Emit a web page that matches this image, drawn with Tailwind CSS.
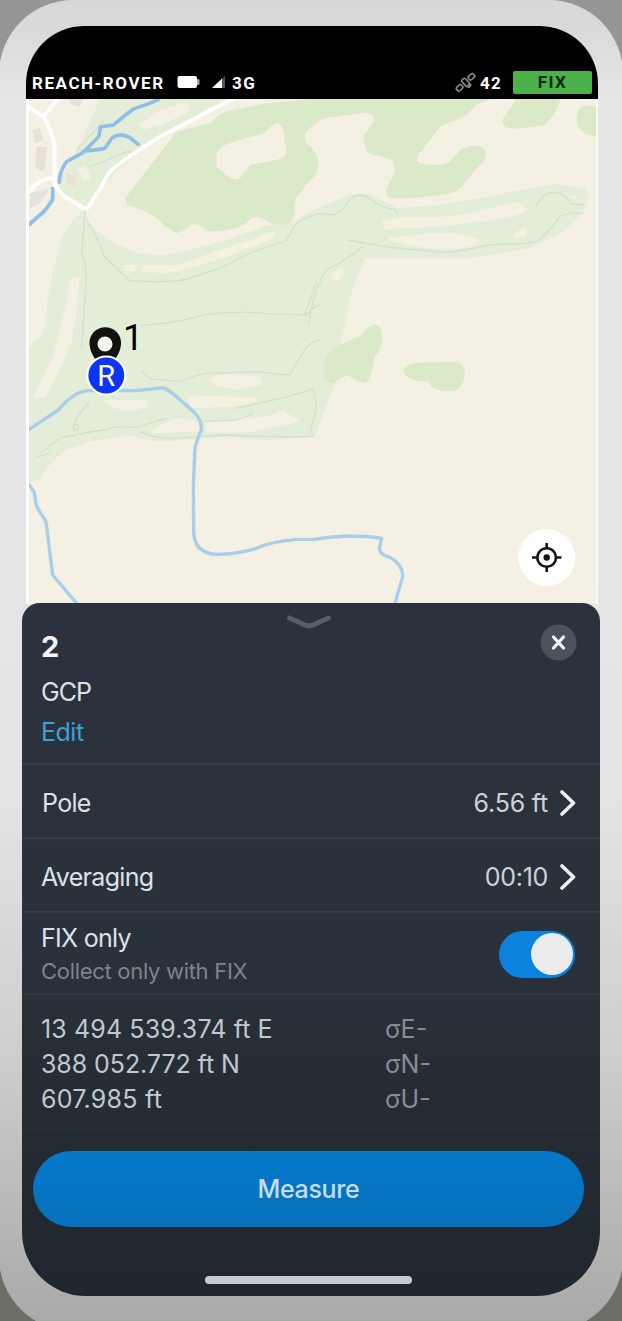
<!DOCTYPE html>
<html lang="en">
<head>
<meta charset="utf-8">
<title>Reach Rover survey</title>
<script src="https://cdn.jsdelivr.net/npm/@tailwindcss/browser@4"></script>
</head>
<body class="w-[622px] h-[1321px] overflow-hidden bg-linear-to-b from-[#969696] to-[#6c6d65] font-['Inter',sans-serif]">
<main class="w-[624px] h-[1331px] -ml-px rounded-[74px] pt-[26px] pl-[23px] bg-[linear-gradient(180deg,#d8d8d8_0px,#d9d9d9_25px,#e6e6e6_100px,#e6e6e8_500px,#e4e3e2_800px,#cfcdcc_1060px,#b4b4b4_1240px,#a8a8a8_1331px)]">
  <div class="w-[578px] h-[1270px] overflow-hidden rounded-t-[60px] rounded-b-[64px]">
    <header class="ml-[4px] w-[572px] h-[73px] bg-black rounded-t-[58px] flex items-end pb-[4px] pl-[6px] pr-[6px] text-white font-['Roboto',sans-serif] font-bold text-[17px] leading-[24px]">
      <span class="w-[145px] tracking-[1.55px] whitespace-nowrap">REACH-ROVER</span>
      <svg class="w-[24px] h-[24px]" viewBox="0 0 24 24"><rect x="0.500" y="5" width="19.500" height="12" rx="2" fill="#fff"/><path d="M20 8h1q1.500 0 1.500 1.500v3q0 1.500-1.500 1.500H20" fill="#aaa"/></svg>
      <svg class="ml-[10px] w-[15px] h-[24px]" viewBox="0 0 15 24"><path d="M14 5V17H10V9z" fill="#555"/><path d="M1 17L11 7.500V17z" fill="#fff"/></svg>
      <span class="ml-[6px] tracking-[1.4px]">3G</span>
      <svg class="ml-auto w-[22px] h-[24px]" viewBox="0 0 22 24" fill="none" stroke="#8d8d8d" stroke-width="1.600"><rect x="-3.300" y="-2.300" width="6.600" height="4.600" rx="1.800" transform="translate(4.600 16.800) rotate(-42)"/><rect x="-3.300" y="-2.300" width="6.600" height="4.600" rx="1.800" transform="translate(16.400 5.800) rotate(-42)"/><rect x="-2.300" y="-4.200" width="4.600" height="8.400" rx="1.800" transform="translate(10.600 11.300) rotate(-42)"/><path d="M12.500 16.500q3-.5 3.500-3.500"/></svg>
      <span class="ml-[3px] w-[33px] tracking-[1.2px]">42</span>
      <span class="w-[79px] h-[23px] leading-[23px] rounded-[2px] bg-[#4cb04b] text-[#0b2a0d] text-center tracking-[1.4px] mb-px">FIX</span>
    </header>

    <section class="relative ml-[4px] w-[572px] h-[505px] bg-[#f4f0e3]">
      <svg class="block w-full h-full" viewBox="26 99 572 505" fill="none" stroke-linejoin="round" stroke-linecap="round">
        <g fill="#e4edd7">
          <path d="M100 99L78 148 60 180 58 190 86 209 115 172 160 136 232 99z"/>
          <path d="M83 210L70 225 60 242 53 272 48 295 45 328 29 348V483L40 480 53 460 67 450 87 442 127 435 160 442 220 437 267 440 315 437 327 403 335 383 342 338 347 312 353 288 365 258H470L530 248 563 232 583 212Q592 190 583 188L557 184 510 192 470 200 437 205 397 208 370 194H350L310 212 293 223 267 225 233 238 197 248 163 255 137 253 113 242 93 228z"/>
        </g>
        <g transform="translate(20 95) scale(.33333)">
          <path fill="#dae9c8" d="M315 310L400 200 470 110 570 85Q600 50 640 45L740 25 880 12H1410L1370 30Q1330 75 1290 80L1260 95 1195 180Q1185 200 1200 205 1240 215 1285 203 1300 190 1320 165 1370 140 1395 165 1405 190 1370 220L1330 270Q1310 295 1270 299 1150 315 1110 308 1092 303 1102 275L1125 230Q1125 195 1105 190L1050 177Q1030 165 1032 120L1062 80Q1062 53 1040 53L910 70 870 98Q845 120 860 145 895 170 896 210 895 235 870 255L835 300Q820 320 825 350 820 385 790 390L750 385Q725 365 710 365 690 365 680 385 620 415 560 407L540 392Q520 380 505 398L470 415 430 390Q400 350 320 330z"/>
          <path fill="#dae9c8" d="M1490 12H1620Q1615 50 1575 90L1500 100Q1440 105 1450 70zM1728 35Q1700 25 1680 40 1665 60 1672 90 1685 120 1728 122z"/>
          <g fill="#f4f0e3">
            <path d="M590 175Q595 155 640 140L730 115 765 85Q785 80 790 110L800 170Q800 185 770 195L690 210 660 250Q645 260 620 240L590 215z"/>
            <path d="M355 90L420 45 500 22Q520 35 490 60L420 90 370 105z"/>
            <path d="M360 510L470 510 600 465 720 425 760 410Q775 420 740 440L620 485 510 520 430 535 365 530zM310 510l45 0-15 22-25-5z"/>
            <path d="M1085 380Q1110 362 1250 368 1370 355 1460 325 1515 318 1520 345 1510 360 1450 368 1280 400 1095 402zM1100 430Q1180 420 1250 413 1370 415 1380 440 1350 465 1250 463 1130 450 1100 430zM1475 430Q1490 400 1520 400L1515 425zM930 540Q950 515 975 520 970 545 945 562zM1645 305l20-5 5 15z"/>
            <path d="M155 545L178 550 170 650 155 740 130 800 75 910 40 905 100 780 125 680z"/>
            <path d="M170 220l25-8 20 40-25 5z"/>
          </g>
          <g fill="#e7e1d7"><path d="M38 105L60 98 70 135 45 145zM50 155L80 155 75 225Q60 235 45 215zM140 230L170 250 165 275 140 265zM145 12H188L180 35 155 30zM30 295L90 280 60 325 28 340z"/></g>
          <g stroke="#d4e0ce" stroke-width="4">
            <path d="M195 350L185 480Q203 520 198 560L185 760M200 375Q240 440 250 480 290 520 330 557 450 565 500 552L600 520 700 470Q770 450 800 435 820 400 830 385 870 360 900 355Q940 365 960 350L1000 305Q1020 295 1040 305L1070 325Q1110 345 1125 342L1135 360"/>
            <path d="M360 692Q470 685 550 660 650 645 740 656L860 660Q880 635 900 630M890 560L855 655M985 435Q1100 460 1280 472 1350 465 1400 450L1520 445Q1560 445 1590 400L1620 365Q1650 350 1690 355M1550 330Q1570 290 1610 292 1640 300 1650 325L1690 330M1025 455Q990 490 920 525 885 570 865 690"/>
            <path d="M170 165L250 80M210 215L320 170 350 175"/>
          </g>
          <path stroke="#8fbfe9" stroke-width="11" d="M415 14Q380 30 340 42 310 65 280 90L242 96 236 125 190 172 140 200Q118 230 118 262M190 168Q230 165 255 160L275 130Q300 110 330 128L355 148M98 280L98 312Q80 345 60 360L28 388"/>
          <path stroke="#fff" stroke-width="12" d="M640 10L420 125Q330 180 275 225 260 240 245 275L205 335Q200 345 190 338L130 302 104 270V150Q90 95 70 65L25 35M70 65L110 15M28 290Q60 245 104 250"/>
        </g>
        <g transform="translate(20 320) scale(.33333)">
          <path fill="#dae9c8" d="M915 115Q950 70 1020 50L1045 20Q1085 0 1087 50 1087 90 1065 105L1050 175Q1035 200 1010 180L980 165 940 190Q910 190 910 160zM1150 150Q1165 125 1210 128L1300 125Q1335 125 1335 165 1330 205 1300 212 1240 218 1225 185 1155 185 1150 150z"/>
          <g fill="#f4f0e3"><path d="M570 175Q610 155 720 170L725 195 660 208 590 200zM500 225L700 232 715 245 640 260 510 265zM250 240L380 240 385 260 330 275 280 265zM395 340Q420 305 480 295L520 300 550 335zM555 305L740 290 790 270 840 305 700 335 560 338zM30 0H75L65 50 30 70z"/></g>
          <g stroke="#d4e0ce" stroke-width="4"><path d="M365 155Q390 180 410 178L480 185Q520 165 560 160L700 155 810 165Q830 130 850 95 870 65 900 60M650 265L760 240Q830 225 880 205L890 260 870 340M60 400L120 355Q180 340 250 330L290 320 350 322Q400 305 440 295M555 305L650 300 700 280M360 335Q400 355 450 355L620 345 740 350 880 350M160 320Q180 270 210 245M50 410L90 400"/><circle cx="167" cy="322" r="8"/></g>
          <path stroke="#abcdec" stroke-width="10" d="M28 328L115 270Q160 215 205 212H350L430 203Q450 210 525 280 545 300 544 330 530 360 525 385L520 500 521 630Q520 700 590 703 650 703 710 685 750 665 830 658H880Q930 650 980 648 1040 648 1085 655L1078 685Q1080 705 1110 712 1150 735 1148 770L1125 850M28 495L42 515 50 560 78 605 98 765 170 850"/>
        </g>
        <path d="M27.500 99V604" stroke="#fffefa" stroke-width="3" stroke-linecap="butt"/><path d="M597.500 99V604" stroke="#fbfbee" stroke-width="2" stroke-linecap="butt"/>
        <path d="M105 370Q89.500 356 89.500 343A15.700 15.700 0 0 1 121 343Q121 356 105 370z" fill="#111"/><circle cx="105" cy="344" r="7.500" fill="#f1f5e9"/>
        <circle cx="106.300" cy="375.500" r="19" fill="#0b36f5" stroke="#fff" stroke-width="2.200"/>
        <text x="106.300" y="386" text-anchor="middle" fill="#fff" font-family="Roboto" font-size="29">R</text>
        <text x="123" y="350" fill="#000" font-family="Roboto" font-size="36">1</text>
        <circle cx="546.700" cy="557.500" r="28.500" fill="#fff"/>
        <g stroke="#161616" stroke-width="2.600" stroke-linecap="butt"><circle cx="546.700" cy="557.500" r="9.300"/><path d="M546.700 543v6M546.700 566v6M532 557.500h6M555.500 557.500h6"/></g><circle cx="546.700" cy="557.500" r="3.200" fill="#161616"/>
      </svg>
    </section>

    <section class="relative -mt-px h-[693px] rounded-t-[18px] bg-linear-to-b from-[#2b323d] via-[#29313a] via-50% to-[#20262d] text-[#dde1ea] text-[25px] leading-[34px]">
      <div class="h-[162px] pl-[19px] pr-[23px] grid grid-cols-[1fr_46px_1fr] items-start border-b-2 border-[#343d48]">
        <div class="pt-[27px]">
          <div class="text-[29px] font-bold text-[#f3f5fa]">2</div>
          <div class="mt-[11px] tracking-[-.9px]">GCP</div>
          <div class="mt-[6px] text-[#3d9fdb] tracking-[-.5px]">Edit</div>
        </div>
        <svg class="mt-[10px] w-[46px] h-[18px]" viewBox="0 0 46 18" fill="none" stroke="#565e68" stroke-width="4.800" stroke-linecap="round" stroke-linejoin="round"><path d="M3.500 5L18 11.500Q23 14 28 11.500L42.500 5"/></svg>
        <svg class="mt-[21px] w-[37px] h-[37px] justify-self-end" viewBox="0 0 37 37"><circle cx="18.500" cy="18.500" r="18" fill="#4a525c"/><path d="M13.500 13L23.500 24M23.500 13L13.500 24" stroke="#f6f7fb" stroke-width="3.200" stroke-linecap="round"/></svg>
      </div>
      <div class="h-[74px] pt-[3px] pl-[20px] pr-[24px] flex items-center border-b-2 border-[#343d48]">
        <span class="tracking-[-.7px]">Pole</span>
        <span class="ml-auto text-[#cdd2db] tracking-[-.2px]">6.56 ft</span>
        <svg class="ml-[11px] w-[17px] h-[28px]" viewBox="0 0 17 28" fill="none" stroke="#f1f3f8" stroke-width="3.600" stroke-linecap="round" stroke-linejoin="round"><path d="M3 3L14.500 14L3 25"/></svg>
      </div>
      <div class="h-[74px] pt-[3px] pl-[19px] pr-[24px] flex items-center border-b-2 border-[#323b44]">
        <span class="tracking-[-.7px]">Averaging</span>
        <span class="ml-auto text-[#cdd2db] tracking-[-.3px]">00:10</span>
        <svg class="ml-[11px] w-[17px] h-[28px]" viewBox="0 0 17 28" fill="none" stroke="#f1f3f8" stroke-width="3.600" stroke-linecap="round" stroke-linejoin="round"><path d="M3 3L14.500 14L3 25"/></svg>
      </div>
      <div class="h-[82px] pt-[2px] pl-[19px] pr-[25px] flex items-center justify-between border-b-2 border-[#303840]">
        <div><div class="tracking-[-.7px]">FIX only</div><div class="text-[22px] text-[#7d848d] tracking-[-.3px] leading-[32px]">Collect only with FIX</div></div>
        <div class="w-[76px] h-[47px] rounded-full bg-[#0a82de] flex items-center justify-end pr-[2px]"><div class="size-[42px] rounded-full bg-[#ececef]"></div></div>
      </div>
      <div class="h-[136px] pt-[17px] pl-[19px] grid grid-cols-[344px_1fr] content-start leading-[35px] text-[#c3c8cf] border-b-2 border-[#272f37]">
        <span class="tracking-[.12px]">13 494 539.374 ft E</span><span class="text-[#868d95]">σE-</span>
        <span class="tracking-[-.08px]">388 052.772 ft N</span><span class="text-[#868d95]">σN-</span>
        <span class="tracking-[.25px]">607.985 ft</span><span class="text-[#868d95]">σU-</span>
      </div>
      <div class="pt-[20px] pl-[11px] pr-[16px] flex flex-col">
        <button class="h-[76px] rounded-full bg-linear-to-b from-[#0478ca] to-[#0770bd] text-[#c9dced] font-medium text-[25px] tracking-[-.35px]">Measure</button>
        <div class="mt-[49px] ml-[172px] w-[207px] h-[8px] rounded-full bg-[#c9cacd]"></div>
      </div>
    </section>
  </div>
</main>
</body>
</html>
